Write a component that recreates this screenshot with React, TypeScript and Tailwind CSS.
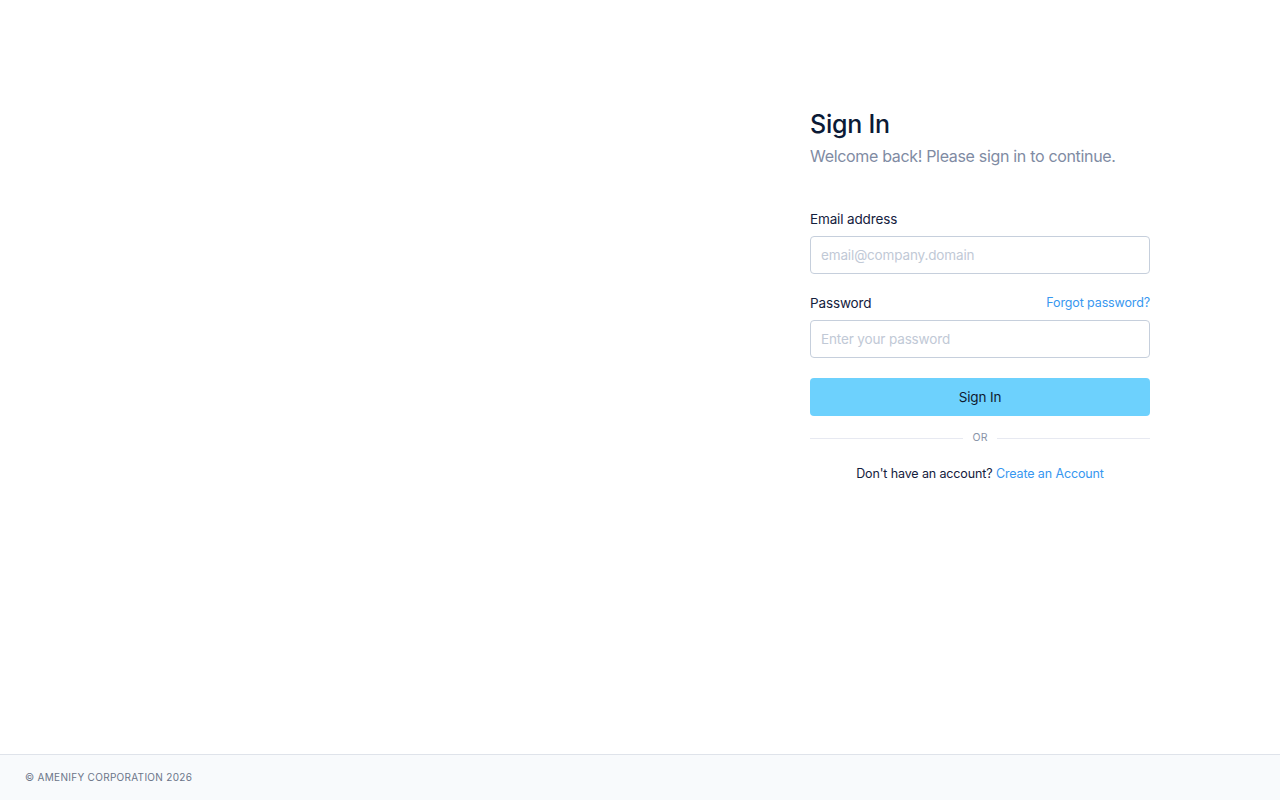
export default function App() {
  return (
    <div className="flex min-h-screen flex-col bg-white font-['Inter','Noto_Sans',sans-serif]">
      <main className="flex flex-1">
        <div className="flex-1" />
        <div className="flex w-[600px] justify-center pt-[107px]">
          <div className="w-[340px]">
            <h1 className="text-[25px] font-medium leading-[34px] tracking-[-0.01em] text-[#0b1a36]">Sign In</h1>
            <p className="mt-[3px] text-[16px] leading-[24px] tracking-[-0.02em] text-[#7f8ba3]">
              Welcome back! Please sign in to continue.
            </p>

            <form className="mt-[41px]" onSubmit={(e) => e.preventDefault()}>
              <label className="block text-[13.5px] leading-[20px] tracking-[-0.01em] text-[#14213d]">Email address</label>
              <input
                type="email"
                placeholder="email@company.domain"
                className="mt-[7px] h-[38px] w-full rounded-[4px] border border-[#c6cfdc] px-[10px] text-[13.5px] tracking-[-0.01em] text-[#14213d] outline-none placeholder:text-[#c1c9d6]"
              />

              <div className="mt-[19px] flex items-center justify-between">
                <label className="text-[13.5px] leading-[20px] tracking-[-0.01em] text-[#14213d]">Password</label>
                <a href="#" className="text-[12.5px] leading-[20px] tracking-[-0.01em] text-[#3797f0]">
                  Forgot password?
                </a>
              </div>
              <input
                type="password"
                placeholder="Enter your password"
                className="mt-[7px] h-[38px] w-full rounded-[4px] border border-[#c6cfdc] px-[10px] text-[13.5px] tracking-[-0.01em] text-[#14213d] outline-none placeholder:text-[#c1c9d6]"
              />

              <button
                type="submit"
                className="mt-[20px] h-[38px] w-full rounded-[4px] bg-[#6dd1fd] text-[13.5px] tracking-[-0.01em] text-[#0f1a30]"
              >
                Sign In
              </button>
            </form>

            <div className="mt-[14px] flex items-center gap-[10px]">
              <div className="h-px flex-1 bg-[#e7e9f1]" />
              <span className="text-[10.5px] leading-[16px] text-[#8a94a8]">OR</span>
              <div className="h-px flex-1 bg-[#e7e9f1]" />
            </div>

            <p className="mt-[18px] text-center text-[12.5px] leading-[20px] tracking-[-0.01em] text-[#14213d]">
              Don't have an account?{" "}
              <a href="#" className="text-[#3797f0]">
                Create an Account
              </a>
            </p>
          </div>
        </div>
      </main>

      <footer className="flex h-[46px] items-center border-t border-[#dfe3ea] bg-[#f8fafc] px-[25px]">
        <span className="text-[10px] uppercase tracking-[0.03em] text-[#6b7589]">
          © Amenify Corporation 2026
        </span>
      </footer>
    </div>
  );
}
